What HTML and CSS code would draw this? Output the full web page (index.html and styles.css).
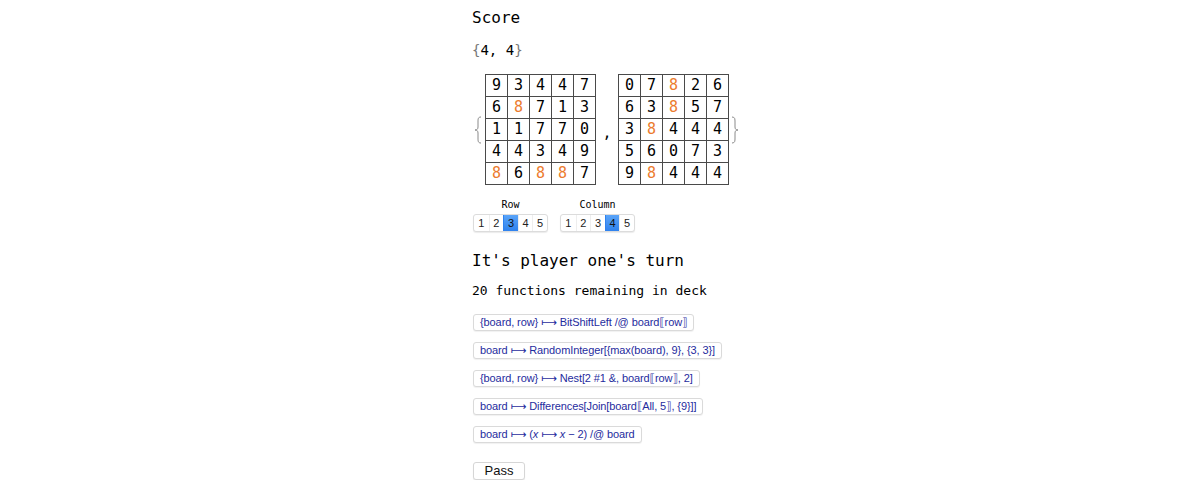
FILE: index.html
```html
<!DOCTYPE html>
<html>
<head>
<meta charset="utf-8">
<link rel="stylesheet" href="styles.css">
</head>
<body>
<div class="page">
  <div class="title">Score</div>
  <div class="score"><span class="br">{</span>4, 4<span class="br">}</span></div>

  <div class="boards">
    <svg class="brace" width="8" height="28" viewBox="0 0 8 28"><path d="M7 1 C4 1 4 3 4 6 L4 11 C4 13 3 14 1 14 C3 14 4 15 4 17 L4 22 C4 25 4 27 7 27" fill="none" stroke="#8a8a8a" stroke-width="1"/></svg>
    <table class="grid">
      <tr><td>9</td><td>3</td><td>4</td><td>4</td><td>7</td></tr>
      <tr><td>6</td><td class="o">8</td><td>7</td><td>1</td><td>3</td></tr>
      <tr><td>1</td><td>1</td><td>7</td><td>7</td><td>0</td></tr>
      <tr><td>4</td><td>4</td><td>3</td><td>4</td><td>9</td></tr>
      <tr><td class="o">8</td><td>6</td><td class="o">8</td><td class="o">8</td><td>7</td></tr>
    </table>
    <span class="comma">,</span>
    <table class="grid">
      <tr><td>0</td><td>7</td><td class="o">8</td><td>2</td><td>6</td></tr>
      <tr><td>6</td><td>3</td><td class="o">8</td><td>5</td><td>7</td></tr>
      <tr><td>3</td><td class="o">8</td><td>4</td><td>4</td><td>4</td></tr>
      <tr><td>5</td><td>6</td><td>0</td><td>7</td><td>3</td></tr>
      <tr><td>9</td><td class="o">8</td><td>4</td><td>4</td><td>4</td></tr>
    </table>
    <svg class="brace" width="8" height="28" viewBox="0 0 8 28"><path d="M1 1 C4 1 4 3 4 6 L4 11 C4 13 5 14 7 14 C5 14 4 15 4 17 L4 22 C4 25 4 27 1 27" fill="none" stroke="#8a8a8a" stroke-width="1"/></svg>
  </div>

  <div class="controls">
    <div class="control">
      <div class="label">Row</div>
      <div class="toggle">
        <span class="tb">1</span><span class="tb">2</span><span class="tb on">3</span><span class="tb">4</span><span class="tb">5</span>
      </div>
    </div>
    <div class="control">
      <div class="label">Column</div>
      <div class="toggle">
        <span class="tb">1</span><span class="tb">2</span><span class="tb">3</span><span class="tb on">4</span><span class="tb">5</span>
      </div>
    </div>
  </div>

  <div class="turn">It's player one's turn</div>
  <div class="deck">20 functions remaining in deck</div>

  <div class="funcs">
    <span class="fn">{board, row} ⟼ BitShiftLeft /@ board⟦row⟧</span>
    <span class="fn">board ⟼ RandomInteger[{max(board), 9}, {3, 3}]</span>
    <span class="fn">{board, row} ⟼ Nest[2 #1 &amp;, board⟦row⟧, 2]</span>
    <span class="fn">board ⟼ Differences[Join[board⟦All, 5⟧, {9}]]</span>
    <span class="fn">board ⟼ (<i>x</i> ⟼ <i>x</i> − 2) /@ board</span>
    <span class="pass">Pass</span>
  </div>
</div>
</body>
</html>
```

FILE: styles.css
```css
html, body {
  margin: 0;
  padding: 0;
  background: #ffffff;
}

.page {
  padding-left: 472px;
  padding-top: 8px;
  font-family: "DejaVu Sans Mono", "Liberation Mono", monospace;
  color: #000;
}

.title {
  font-size: 16px;
  line-height: 20px;
}

.score {
  margin-top: 12px;
  font-size: 14px;
  line-height: 20px;
}

.score .br {
  color: #777;
  font-weight: 300;
}

.boards {
  margin-top: 14px;
  display: flex;
  align-items: center;
  margin-left: 2px;
}

.brace {
  display: block;
}

.boards .brace:first-child {
  margin-right: 3px;
}

.boards .brace:last-child {
  margin-left: 2px;
}

.grid {
  border-collapse: collapse;
}

.grid td {
  width: 21px;
  height: 21px;
  padding: 0;
  border: 1px solid #4a4a4a;
  text-align: center;
  vertical-align: middle;
  font-size: 15px;
  line-height: 21px;
}

.grid td.o {
  color: #ec7b2e;
}

.comma {
  font-size: 15px;
  width: 22px;
  text-align: center;
  padding-top: 6px;
}

.controls {
  margin-top: 14px;
  display: flex;
  gap: 12px;
  padding-left: 1px;
}

.control {
  display: flex;
  flex-direction: column;
  align-items: center;
}

.label {
  font-size: 10px;
  line-height: 12px;
  height: 12px;
  margin-bottom: 3px;
}

.toggle {
  display: flex;
  border: 1px solid #dcdcdc;
  border-radius: 3px;
  box-shadow: 0 1px 1px rgba(0, 0, 0, 0.08);
  background: #fff;
  overflow: hidden;
}

.tb {
  width: 14.6px;
  height: 16px;
  line-height: 16px;
  text-align: center;
  font-family: "Liberation Sans", Arial, sans-serif;
  font-size: 11px;
  color: #222;
  border-left: 1px solid #eeeeee;
  box-sizing: border-box;
}

.tb:first-child {
  border-left: none;
}

.tb.on {
  background: linear-gradient(#5aa4f8, #2f82ee);
  border-left-color: #2f82ee;
  color: #111;
}

.turn {
  margin-top: 19px;
  font-size: 16px;
  line-height: 20px;
}

.deck {
  margin-top: 11px;
  font-size: 13px;
  line-height: 18px;
}

.funcs {
  margin-top: 14px;
  display: flex;
  flex-direction: column;
  align-items: flex-start;
  gap: 11px;
  padding-left: 1px;
}

.fn {
  display: block;
  height: 17px;
  box-sizing: border-box;
  line-height: 15px;
  padding: 0 6px;
  border: 1px solid #dadada;
  border-radius: 3px;
  box-shadow: 0 1px 1px rgba(0, 0, 0, 0.06);
  background: #fff;
  font-family: "Liberation Sans", Arial, "DejaVu Sans", sans-serif;
  font-size: 11px;
  letter-spacing: -0.1px;
  color: #1f2c9e;
  white-space: nowrap;
}

.pass {
  display: block;
  margin-top: 8px;
  width: 52px;
  height: 18px;
  box-sizing: border-box;
  line-height: 16px;
  text-align: center;
  border: 1px solid #d6d6d6;
  border-radius: 3px;
  box-shadow: 0 1px 1px rgba(0, 0, 0, 0.08);
  background: #fff;
  font-family: "Liberation Sans", Arial, sans-serif;
  font-size: 13px;
  color: #111;
}
```
